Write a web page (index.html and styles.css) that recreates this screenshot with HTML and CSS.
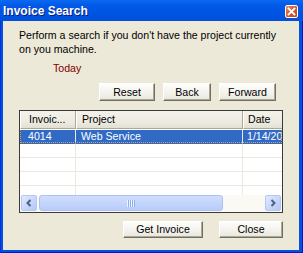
FILE: index.html
```html
<!DOCTYPE html>
<html>
<head>
<meta charset="utf-8">
<link rel="stylesheet" href="styles.css">
</head>
<body>
<div class="window">
  <div class="titlebar">
    <span class="title">Invoice Search</span>
    <span class="close-btn">
      <svg width="13" height="13" viewBox="0 0 13 13"><path d="M3.5 3.5 L9.5 9.5 M9.5 3.5 L3.5 9.5" stroke="#fff" stroke-width="1.8" stroke-linecap="square"/></svg>
    </span>
  </div>
  <div class="content">
    <p class="desc">Perform a search if you don't have the project currently<br>on you machine.</p>
    <div class="today">Today</div>
    <div class="nav-row">
      <button class="btn btn-reset">Reset</button>
      <button class="btn btn-back">Back</button>
      <button class="btn btn-forward">Forward</button>
    </div>
    <div class="list">
      <div class="list-clip">
        <div class="row header">
          <div class="cell c1">Invoic...</div>
          <div class="cell c2">Project</div>
          <div class="cell c3">Date</div>
        </div>
        <div class="rows">
          <div class="row data selected">
            <div class="cell c1">4014</div>
            <div class="cell c2">Web Service</div>
            <div class="cell c3">1/14/2005</div>
          </div>
          <div class="row data"><div class="cell c1"></div><div class="cell c2"></div><div class="cell c3"></div></div>
          <div class="row data"><div class="cell c1"></div><div class="cell c2"></div><div class="cell c3"></div></div>
          <div class="row data"><div class="cell c1"></div><div class="cell c2"></div><div class="cell c3"></div></div>
          <div class="row data"><div class="cell c1"></div><div class="cell c2"></div><div class="cell c3"></div></div>
        </div>
      </div>
      <div class="hscroll">
        <div class="sb-btn">
          <svg width="8" height="8" viewBox="0 0 8 8"><path d="M5.5 1 L2.5 4 L5.5 7" fill="none" stroke="#4D6185" stroke-width="2"/></svg>
        </div>
        <div class="sb-track">
          <div class="sb-thumb">
            <svg width="8" height="7" viewBox="0 0 8 7"><path d="M0.5 0 V7 M2.5 0 V7 M4.5 0 V7 M6.5 0 V7" stroke="#EEF4FE" stroke-width="1"/><path d="M1.5 0 V7 M3.5 0 V7 M5.5 0 V7 M7.5 0 V7" stroke="#8CB0F8" stroke-width="1"/></svg>
          </div>
        </div>
        <div class="sb-btn">
          <svg width="8" height="8" viewBox="0 0 8 8"><path d="M2.5 1 L5.5 4 L2.5 7" fill="none" stroke="#4D6185" stroke-width="2"/></svg>
        </div>
      </div>
    </div>
    <div class="bottom-row">
      <button class="btn btn-get">Get Invoice</button>
      <button class="btn btn-close">Close</button>
    </div>
  </div>
</div>
</body>
</html>
```
FILE: styles.css
```css
html, body {
  margin: 0;
  padding: 0;
  background: #ffffff;
}

.window {
  width: 303px;
  height: 253px;
  box-sizing: border-box;
  display: flex;
  flex-direction: column;
  background: #0550E0;
  box-shadow: inset 1px 0 #0831D9, inset -1px 0 #0019CF, inset 0 -1px #0019CF;
  font-family: "Liberation Sans", Arial, sans-serif;
  font-size: 10.6px;
  color: #000;
}

.titlebar {
  height: 21px;
  flex: none;
  display: flex;
  align-items: flex-start;
  justify-content: space-between;
  background: linear-gradient(180deg, #0B6AF0 0%, #0259E8 25%, #0055E3 60%, #0050DA 100%);
}

.title {
  font-size: 12px;
  font-weight: bold;
  color: #fff;
  line-height: 21px;
  padding-left: 3px;
  padding-top: 1px;
  text-shadow: 1px 1px #0A1E80;
}

.close-btn {
  width: 13px;
  height: 13px;
  margin-top: 5px;
  margin-right: 5px;
  box-sizing: border-box;
  border: 1px solid #fff;
  border-radius: 2px;
  background: linear-gradient(135deg, #E8896A 0%, #D85C37 45%, #C2401C 100%);
  display: flex;
  align-items: center;
  justify-content: center;
}

.close-btn svg {
  display: block;
  margin: -1px;
}

.content {
  flex: 1;
  margin: 0 4px 3px 3px;
  background: #ECE9D8;
  display: flex;
  flex-direction: column;
}

.desc {
  margin: 0;
  padding: 7px 0 0 16px;
  line-height: 14px;
}

.today {
  margin-top: 5px;
  padding-left: 50px;
  line-height: 14px;
  color: #800000;
}

.nav-row {
  display: flex;
  gap: 8px;
  margin-top: 8px;
  padding-left: 96px;
}

.btn {
  font-family: "Liberation Sans", Arial, sans-serif;
  font-size: 10.6px;
  color: #000;
  height: 18px;
  padding: 0;
  margin: 0;
  box-sizing: border-box;
  background: linear-gradient(180deg, #FDFDFB 0%, #F4F3EE 50%, #E9E7DC 100%);
  border: 1px solid;
  border-color: #FFFFFF #716F64 #716F64 #FFFFFF;
  box-shadow: inset -1px -1px #ACA899;
  border-radius: 0;
  line-height: 15px;
}

.btn-reset { width: 56px; }
.btn-back { width: 48px; }
.btn-forward { width: 57px; }

.list {
  margin-top: 9px;
  margin-left: 16px;
  width: 264px;
  box-sizing: border-box;
  border: 1px solid #3A3A3A;
  background: #fff;
  display: flex;
  flex-direction: column;
}

.list-clip {
  overflow: hidden;
  width: 262px;
  height: 84px;
}

.row {
  display: flex;
  width: 320px;
}

.cell {
  flex: none;
  box-sizing: border-box;
  white-space: nowrap;
  overflow: hidden;
}

.c1 { width: 56px; padding-left: 8px; }
.c2 { width: 167px; padding-left: 5px; }
.c3 { width: 90px; padding-left: 4px; }

.header {
  height: 18px;
}

.header .cell {
  height: 18px;
  line-height: 17px;
  background: linear-gradient(180deg, #F3F2EA 0%, #ECEAE0 70%, #E2DFD2 100%);
  border-left: 1px solid #FFFFFF;
  border-right: 1px solid #ACA899;
  border-bottom: 1px solid #ACA899;
}

.rows {
  padding-top: 1px;
}

.data .cell {
  height: 14px;
  line-height: 13px;
  border-right: 1px solid #EBE9DD;
  border-bottom: 1px solid #EBE9DD;
}

.selected {
  position: relative;
}

.selected .cell {
  background: #316AC5;
  color: #fff;
  border-right-color: #EBE9DD;
  border-bottom-color: #316AC5;
}

.selected::after {
  content: "";
  position: absolute;
  left: 0;
  top: 0;
  width: 262px;
  height: 13px;
  box-sizing: border-box;
  border: 1px dotted #D9A256;
  border-top-color: transparent;
  pointer-events: none;
}

.hscroll {
  height: 17px;
  display: flex;
  background: #FAF9F4;
}

.sb-btn {
  width: 16px;
  height: 16px;
  margin: 0 0 0 1px;
  box-sizing: border-box;
  border: 1px solid #B4C8F6;
  border-radius: 2px;
  background: linear-gradient(135deg, #E1EAFE 0%, #C6D6FC 55%, #B4C8F6 100%);
  display: flex;
  align-items: center;
  justify-content: center;
}

.sb-btn:last-child {
  margin: 0 1px 0 0;
}

.sb-track {
  flex: 1;
  display: flex;
  padding: 0 42px 0 2px;
}

.sb-thumb {
  flex: 1;
  height: 16px;
  box-sizing: border-box;
  border: 1px solid #A9C1F5;
  border-radius: 3px;
  background: linear-gradient(180deg, #D0DEFD 0%, #C4D5FC 50%, #B8CCF9 100%);
  display: flex;
  align-items: center;
  justify-content: center;
}

.sb-thumb svg {
  display: block;
}

.bottom-row {
  display: flex;
  gap: 16px;
  margin-top: 8px;
  padding-left: 120px;
}

.btn-get { width: 80px; height: 17px; }
.btn-close { width: 64px; height: 17px; }
```
